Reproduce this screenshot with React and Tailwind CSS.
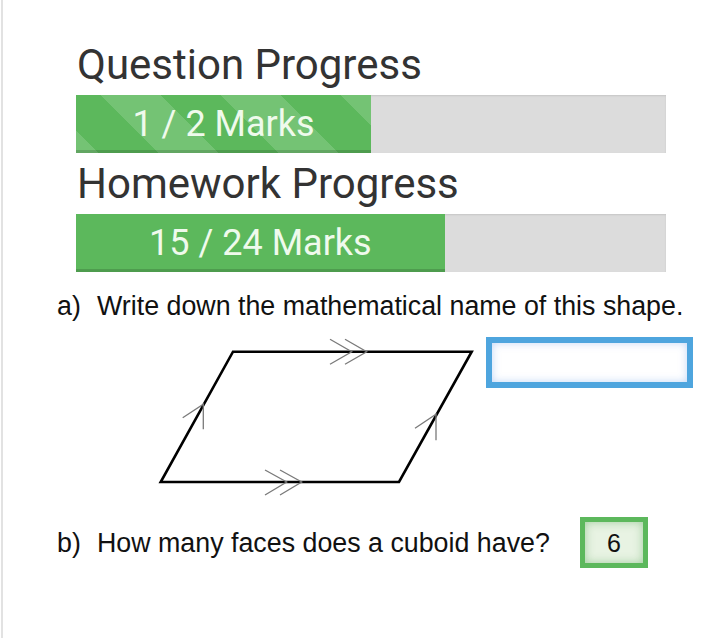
import React from "react";

const bars = [
  { title: "Question Progress", got: 1, total: 2, striped: true },
  { title: "Homework Progress", got: 15, total: 24, striped: false },
];

const ProgressBlock = ({ title, got, total, striped }) => {
  const pct = (got / total) * 100;
  return (
    <div>
      <h2 className="text-[42px] leading-[61px] text-[#333] font-['Roboto',sans-serif] pl-[1px]">
        {title}
      </h2>
      <div className="h-[58px] w-[590px] bg-[#dcdcdc] shadow-[inset_0_1px_2px_rgba(0,0,0,0.1)] flex">
        <div
          className={
            "h-full flex items-center justify-center bg-[#5cb85c] shadow-[inset_0_-3px_0_rgba(0,0,0,0.15)] " +
            (striped
              ? "bg-[linear-gradient(45deg,rgba(255,255,255,.15)_25%,transparent_25%,transparent_50%,rgba(255,255,255,.15)_50%,rgba(255,255,255,.15)_75%,transparent_75%,transparent)] bg-[length:120px_120px] bg-size-[120px_120px] bg-[position:25px_0] bg-position-[25px_0]"
              : "")
          }
          style={{ width: `${pct}%` }}
        >
          <span className="text-[36px] text-[#effaec] font-['Roboto',sans-serif] pb-[1px]">
            {got} / {total} Marks
          </span>
        </div>
      </div>
    </div>
  );
};

const Shape = () => (
  <svg width="330" height="165" viewBox="0 0 330 165" className="block shrink-0">
    <polygon
      points="83,15.7 321.7,15.7 249,146 10.7,146"
      fill="none"
      stroke="#000"
      strokeWidth="2.6"
      strokeLinejoin="miter"
    />
    <g fill="none" stroke="#7a7a7a" strokeWidth="1.3">
      <polyline points="180,3.3 201.7,15.7 180,28.3" />
      <polyline points="195,3.3 216.7,15.7 195,28.3" />
      <polyline points="115,134 136.7,146 115,159" />
      <polyline points="130,134 151.7,146 130,159" />
      <polyline points="32.7,81.7 53.3,68.3 53.3,93.3" />
      <polyline points="265,92.3 286,78.3 286,104.3" />
    </g>
  </svg>
);

export default function App() {
  return (
    <div className="min-h-[638px] w-[712px] bg-white ml-[1px] border-l-2 border-[#e2e2e2] overflow-hidden">
      <div className="pt-[34px] pl-[73px]">
        {bars.map((b) => (
          <ProgressBlock key={b.title} {...b} />
        ))}
      </div>

      <div className="pl-[54px] pt-[18px] font-['Liberation_Sans',Arial,sans-serif] text-[26.8px] leading-[32px] text-[#111]">
        <div className="flex">
          <span className="w-[40px] shrink-0">a)</span>
          <p>Write down the mathematical name of this shape.</p>
        </div>

        <div className="flex items-start mt-[14px]">
          <div className="ml-[93px]">
            <Shape />
          </div>
          <div className="ml-[6px] mt-[1px] w-[207px] h-[51px] border-[6px] border-[#4ea5de] bg-white shadow-[inset_0_0_9px_rgba(80,140,230,0.35)]" />
        </div>

        <div className="flex items-center mt-[16px]">
          <span className="w-[40px] shrink-0">b)</span>
          <p>How many faces does a cuboid have?</p>
          <div className="ml-[30px] w-[68px] h-[51px] border-[5px] border-[#5cb85c] bg-[#e8f3e3] shadow-[inset_0_0_10px_rgba(92,170,92,0.5)] flex items-center justify-center text-[25px]">
            6
          </div>
        </div>
      </div>
    </div>
  );
}
